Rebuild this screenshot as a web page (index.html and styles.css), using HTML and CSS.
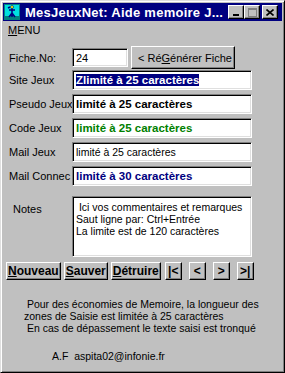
FILE: index.html
```html
<!DOCTYPE html>
<html lang="fr">
<head>
  <meta charset="UTF-8" />
  <title>MesJeuxNet: Aide memoire Jeux</title>
  <link rel="stylesheet" href="styles.css">
</head>
<body>

  <div class="window">

    <!-- Barre de titre -->
    <div class="titlebar">
      <svg class="app-icon" width="16" height="16" viewBox="0 0 16 16">
        <rect x="0.5" y="0.5" width="15" height="15" fill="#00e0e0" stroke="#008080" />
        <rect x="1" y="12" width="14" height="3" fill="#008080" />
        <path d="M8 2 L8 13 M5 6 L11 6 M8 9 L5 13 M8 9 L11 13 M4 4 L6 3" stroke="#000080" stroke-width="1.5" fill="none" />
        <circle cx="8" cy="3" r="1.5" fill="#ffff00" stroke="#000080" stroke-width="0.6" />
      </svg>
      <span class="title">MesJeuxNet: Aide memoire J...</span>
      <div class="title-btns">
        <span class="tbtn">
          <svg width="8" height="7" viewBox="0 0 8 7"><rect x="1" y="5" width="6" height="2" fill="#000" /></svg>
        </span>
        <span class="tbtn">
          <svg width="9" height="9" viewBox="0 0 9 9"><rect x="0.5" y="0.5" width="8" height="8" fill="none" stroke="#808080" /><rect x="0" y="0" width="9" height="2" fill="#808080" /></svg>
        </span>
        <span class="tbtn tbtn-close">
          <svg width="8" height="7" viewBox="0 0 8 7"><path d="M0.5 0.5 L7.5 6.5 M7.5 0.5 L0.5 6.5" stroke="#000" stroke-width="1.6" /></svg>
        </span>
      </div>
    </div>

    <!-- Menu -->
    <div class="menubar"><span><u>M</u>ENU</span></div>

    <!-- Formulaire -->
    <div class="form">
      <div class="row row-fiche">
        <label>Fiche.No:</label>
        <div class="field field-short">24</div>
        <button class="btn btn-regen">&lt; Ré<u>G</u>énérer Fiche</button>
      </div>
      <div class="row">
        <label>Site Jeux</label>
        <div class="field field-bold"><span class="selected">Zlimité à 25 caractères</span></div>
      </div>
      <div class="row">
        <label>Pseudo Jeux</label>
        <div class="field field-bold">limité à 25 caractères</div>
      </div>
      <div class="row">
        <label>Code Jeux</label>
        <div class="field field-bold green">limité à 25 caractères</div>
      </div>
      <div class="row">
        <label>Mail Jeux</label>
        <div class="field">limité à 25 caractères</div>
      </div>
      <div class="row">
        <label>Mail Connec</label>
        <div class="field field-bold navy">limité à 30 caractères</div>
      </div>
      <div class="row row-notes">
        <label>Notes</label>
        <div class="field field-notes"> Ici vos commentaires et remarques
Saut ligne par: Ctrl+Entrée
La limite est de 120 caractères</div>
      </div>

      <!-- Boutons -->
      <div class="btn-row">
        <button class="btn btn-main"><u>N</u>ouveau</button>
        <button class="btn btn-main"><u>S</u>auver</button>
        <button class="btn btn-main"><u>D</u>étruire</button>
        <button class="btn btn-nav">|&lt;</button>
        <button class="btn btn-nav">&lt;</button>
        <button class="btn btn-nav">&gt;</button>
        <button class="btn btn-nav">&gt;|</button>
      </div>
    </div>

    <!-- Infos -->
    <div class="info"> Pour des économies de Memoire, la longueur des
zones de Saisie est limitée à 25 caractères
 En cas de dépassement le texte saisi est tronqué</div>
    <div class="author">A.F  aspita02@infonie.fr</div>

  </div>

</body>
</html>
```

FILE: styles.css
```css
:root {
  --gris: #c0c0c0;
  --gris-fonce: #808080;
  --gris-clair: #dfdfdf;
  --titre: #000080;
  --vert: #008000;
}

body {
  margin: 0;
  font-family: "Liberation Sans", Arial, sans-serif;
  font-size: 10.5px;
  background: var(--gris);
}

.window {
  width: 285px;
  height: 373px;
  box-sizing: border-box;
  background: var(--gris);
  border: 1px solid;
  border-color: var(--gris-clair) #000 #000 var(--gris-clair);
  box-shadow: inset 1px 1px #fff, inset -1px -1px var(--gris-fonce);
  padding: 2px;
  color: #000;
}

/* barre de titre */
.titlebar {
  height: 18px;
  background: var(--titre);
  display: flex;
  align-items: center;
  padding-left: 1px;
}

.app-icon {
  flex: none;
}

.title {
  color: #fff;
  font-weight: bold;
  font-size: 13px;
  letter-spacing: 0.25px;
  margin-left: 5px;
  white-space: nowrap;
}

.title-btns {
  margin-left: auto;
  margin-right: 4px;
  display: flex;
}

.tbtn {
  width: 16px;
  height: 14px;
  box-sizing: border-box;
  background: var(--gris);
  border: 1px solid;
  border-color: #fff #000 #000 #fff;
  box-shadow: inset -1px -1px var(--gris-fonce);
  display: flex;
  align-items: center;
  justify-content: center;
}

.tbtn-close {
  margin-left: 2px;
}

/* menu */
.menubar {
  height: 18px;
  line-height: 18px;
  padding-left: 5px;
  font-size: 11px;
}

/* formulaire */
.form {
  padding: 7px 0 0 3px;
  display: flex;
  flex-direction: column;
  gap: 4px;
}

.row {
  display: flex;
  align-items: center;
  height: 20px;
}

.row label {
  width: 66px;
  flex: none;
  overflow: hidden;
  white-space: nowrap;
  padding-left: 3px;
  box-sizing: border-box;
  font-size: 11px;
}

.row-fiche {
  height: 23px;
  margin-bottom: -3px;
}

.field {
  width: 180px;
  height: 20px;
  box-sizing: border-box;
  background: #fff;
  border: 1px solid;
  border-color: var(--gris-fonce) #fff #fff var(--gris-fonce);
  box-shadow: inset 1px 1px #000, inset -1px -1px var(--gris-clair);
  padding: 2px 3px;
  line-height: 14px;
  white-space: nowrap;
  overflow: hidden;
}

.field-short {
  width: 56px;
  height: 19px;
  font-size: 11px;
}

.field-bold {
  font-weight: bold;
  font-size: 11.5px;
}

.selected {
  background: var(--titre);
  color: #fff;
}

.green {
  color: var(--vert);
}

.navy {
  color: var(--titre);
}

.row-notes {
  height: 61px;
  align-items: flex-start;
  margin-top: 6px;
}

.row-notes label {
  padding-left: 7px;
  margin-top: 7px;
}

.field-notes {
  height: 61px;
  white-space: pre;
  line-height: 12px;
  padding-top: 4px;
}

/* boutons */
.btn {
  font-family: inherit;
  font-size: 11px;
  color: #000;
  background: var(--gris);
  border: 1px solid;
  border-color: #fff #000 #000 #fff;
  box-shadow: inset -1px -1px var(--gris-fonce);
  padding: 0;
  margin: 0;
  cursor: pointer;
}

.btn-regen {
  width: 104px;
  height: 23px;
  margin-left: 3px;
  text-align: left;
  padding-left: 6px;
}

.btn-row {
  display: flex;
  gap: 3px;
  margin-top: 1px;
}

.btn-main {
  height: 18px;
  font-size: 12px;
  font-weight: bold;
  padding: 0 1px;
}

.btn-nav {
  width: 17px;
  height: 18px;
  font-size: 12px;
  font-weight: bold;
  margin-left: 1px;
}

.btn-nav + .btn-nav {
  margin-left: 4px;
}

/* infos */
.info {
  white-space: pre;
  line-height: 12px;
  margin: 18px 0 0 21px;
}

.author {
  margin: 16px 0 0 49px;
  white-space: pre;
}
```
